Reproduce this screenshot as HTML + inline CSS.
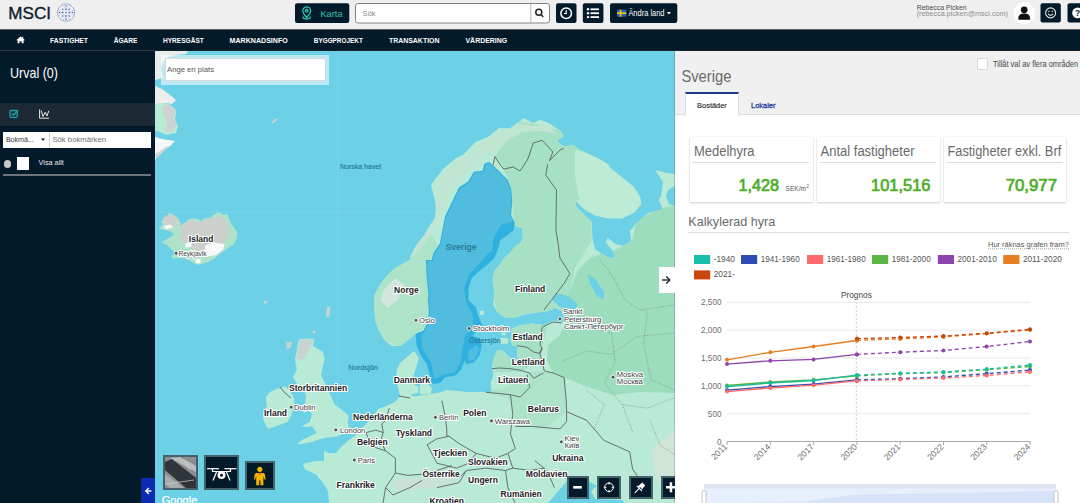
<!DOCTYPE html>
<html><head><meta charset="utf-8">
<style>
*{box-sizing:border-box;margin:0;padding:0}
html,body{width:1080px;height:503px;overflow:hidden;background:#fff;font-family:"Liberation Sans",sans-serif}
.a{position:absolute}
svg{position:absolute;overflow:visible}
#hdr{left:0;top:0;width:1080px;height:29px;background:#efefef}
#nav{left:0;top:29px;width:1080px;height:21px;background:#031a2a;border-top:1px solid #5d686e}
#side{left:0;top:50px;width:155px;height:453px;background:#031a2a;border-top:1px solid #2f3a42}
#map{left:155px;top:51px;width:520px;height:452px;background:#6cd1e6;overflow:hidden}
#rp{left:675px;top:51px;width:405px;height:452px;background:#fff;overflow:hidden}
.btn{position:absolute;background:#031a2a;border-radius:2px}
.mb{position:absolute;background:#031a2a;border:2px solid #43626c}
</style></head><body>
<div id="hdr" class="a"></div>
<div id="nav" class="a"></div>
<div class="a" style="left:155px;top:50px;width:925px;height:1px;background:#16232b"></div>
<div id="side" class="a">
  <div class="a" style="left:0;top:52px;width:155px;height:23px;background:#1c2a35"></div>
  <div class="a" style="left:3px;top:81px;width:148px;height:16px;background:#fff"></div>
  <div class="a" style="left:49px;top:82px;width:1px;height:14px;background:#d0d0d0"></div>
  <div class="a" style="left:3.5px;top:109px;width:7.5px;height:7.5px;border-radius:50%;background:#c8c8c8"></div>
  <div class="a" style="left:17px;top:106px;width:12px;height:12.5px;background:#fff"></div>
  <div class="a" style="left:3px;top:123px;width:148px;height:1.5px;background:#6a747a"></div>
  <div class="a" style="left:141px;top:427px;width:14px;height:26px;background:#0b2bb0"></div>
</div>
<div id="map" class="a"><svg width="520" height="452" viewBox="155 51 520 452" style="position:absolute;left:0;top:0" font-family="Liberation Sans, sans-serif">
<rect x="155" y="51" width="520" height="452" fill="#6cd1e6"/>
<line x1="337.8" y1="51" x2="337.8" y2="503" stroke="#7dd7ea" stroke-width="0.7"/>
<line x1="155" y1="212" x2="675" y2="212" stroke="#7dd7ea" stroke-width="0.7"/>
<polygon points="155.0,51.0 188.0,51.0 186.0,54.0 175.0,55.0 168.0,57.0 163.0,62.0 161.0,70.0 163.0,78.0 155.0,80.0" fill="#e8ecea"/>
<polygon points="155.0,86.0 162.0,89.0 170.0,95.0 176.0,100.0 172.0,104.0 165.0,103.0 160.0,107.0 155.0,109.0" fill="#eceeed"/>
<polygon points="155.0,104.0 162.0,103.0 168.0,104.0 172.0,108.0 176.0,112.0 175.0,120.0 178.0,126.0 176.0,133.0 166.0,135.0 158.0,131.0 155.0,131.0" fill="#b9ead5"/>
<polygon points="163.0,106.0 170.0,104.0 176.0,110.0 174.0,118.0 177.0,125.0 172.0,132.0 165.0,131.0 167.0,120.0 163.0,114.0" fill="#cdd3d1"/>
<polygon points="155.0,137.0 162.0,139.0 175.0,141.0 170.0,146.0 163.0,150.0 158.0,156.0 155.0,160.0" fill="#f6f7f7"/>
<polygon points="160.0,151.0 166.0,147.0 170.0,146.0 163.0,152.0 158.0,157.0 155.0,158.0 155.0,154.0" fill="#d2d6d5"/>
<polygon points="168.9,213.3 174.5,214.7 177.9,218.2 180.7,223.1 180.0,225.9 182.8,226.6 188.4,219.6 195.3,218.2 200.9,221.0 204.4,218.2 210.6,217.5 214.8,214.0 219.0,212.0 223.2,214.7 227.3,214.0 231.5,224.5 234.3,227.9 237.1,231.4 237.1,237.0 234.3,243.9 230.1,246.7 225.9,249.5 220.4,253.7 213.4,259.2 207.9,262.0 199.5,264.8 195.3,264.1 189.8,260.6 185.6,258.5 180.0,257.9 173.1,258.5 171.0,256.5 175.9,253.0 171.7,249.5 167.5,245.3 161.3,242.6 168.2,238.4 174.5,234.2 170.3,231.4 164.7,230.0 158.5,228.6 163.3,224.5 160.6,221.7 166.1,217.5" fill="#aee3c9"/>
<polygon points="180.0,225.9 188.4,220.3 200.9,221.7 210.6,218.2 220.4,216.1 227.3,221.7 230.1,232.8 224.5,243.9 213.4,250.9 205.1,253.7 196.7,250.9 187.0,245.3 180.0,239.8 181.4,232.8" fill="#cbd0cd"/>
<polygon points="163.3,217.5 168.9,214.7 174.5,216.1 177.9,220.3 178.6,225.9 171.7,227.3 166.1,227.3 163.3,223.1" fill="#cbd0cd"/>
<polygon points="205.1,245.3 213.4,242.6 224.5,243.9 223.2,249.5 216.2,255.1 207.9,256.5 205.1,250.9" fill="#f7f8f8"/>
<polygon points="184.9,243.2 191.9,242.6 191.2,246.7 185.6,247.4" fill="#f7f8f8"/>
<polygon points="195.3,259.2 200.9,258.5 200.2,263.4 195.6,263.1" fill="#f7f8f8"/>
<polygon points="163.3,225.9 170.3,224.5 173.1,227.3 166.1,229.3" fill="#f7f8f8"/>
<polygon points="314.8,338.8 300.8,338.8 298.9,340.0 297.5,345.0 296.9,349.7 294.9,359.6 296.9,369.6 292.9,377.5 296.6,383.0 301.0,390.0 305.5,393.2 306.0,398.0 305.5,402.1 303.3,413.2 308.0,411.0 312.1,413.2 309.9,422.0 304.0,425.0 301.0,426.5 306.0,427.0 312.1,426.5 316.6,433.1 312.0,435.0 307.7,437.6 302.0,440.0 296.6,444.2 304.0,443.5 312.1,442.0 320.0,439.0 327.7,437.6 337.0,436.5 345.4,433.1 350.0,431.0 347.6,422.0 349.0,416.0 343.2,410.9 334.3,404.3 331.0,396.0 327.7,388.7 321.0,375.4 323.2,364.0 324.7,359.6 322.7,351.7 312.8,345.7" fill="#b9ead5"/>
<polygon points="300.8,339.8 314.0,339.5 311.0,346.0 306.0,355.0 302.0,360.0 297.0,359.0 297.5,348.0" fill="#c6d3ce"/>
<polygon points="286.0,342.0 292.0,341.7 291.0,347.0 287.0,349.7" fill="#c3d6cd"/>
<polygon points="327.0,307.0 330.7,306.0 329.0,318.0 326.0,316.0" fill="#c3d6cd"/>
<polygon points="312.8,330.8 315.8,331.0 315.0,333.8 312.5,333.5" fill="#c3d6cd"/>
<polygon points="264.0,301.0 267.0,300.5 266.5,304.0 264.0,303.5" fill="#c3d6cd"/>
<polygon points="276.6,388.7 285.5,386.5 291.0,392.0 294.4,399.8 292.2,413.2 287.7,422.0 278.0,425.5 267.8,428.7 263.3,420.0 263.3,413.2 267.0,406.0 265.5,397.6 270.0,392.0" fill="#b9ead5"/>
<polygon points="675.0,174.0 667.0,173.0 655.0,170.0 663.0,182.0 661.0,196.0 659.0,200.0 663.0,209.5 649.2,212.6 645.0,215.4 636.0,223.4 629.7,231.3 631.3,240.9 623.4,245.7 615.4,244.1 607.5,237.7 605.9,242.5 612.2,250.4 615.4,256.8 610.7,258.4 601.1,253.6 594.8,248.8 592.4,237.7 591.6,221.8 586.8,217.0 575.7,205.9 575.7,201.1 583.6,209.1 594.8,215.4 607.5,218.6 621.8,218.6 634.5,212.3 640.9,204.3 640.2,197.1 633.7,186.8 620.8,176.5 607.9,166.1 610.0,166.0 603.0,161.0 592.0,155.5 580.0,150.0 573.0,145.0 564.0,146.5 556.5,141.0 564.0,136.0 560.0,130.4 549.0,123.3 540.0,119.7 533.0,123.3 524.0,118.0 517.0,123.3 510.0,128.6 499.0,128.0 488.0,137.0 475.5,142.0 463.0,155.0 456.0,158.0 443.0,169.0 431.0,185.0 434.0,196.0 436.0,208.0 435.0,218.0 428.6,227.7 424.0,235.7 417.5,243.6 411.0,254.8 409.7,260.0 397.0,267.0 390.0,272.5 381.0,283.0 374.0,296.0 374.0,308.0 375.7,322.6 379.3,331.6 384.7,340.5 391.8,345.9 400.8,345.9 411.5,337.0 418.7,331.6 424.0,332.0 420.0,345.0 424.0,355.0 430.0,367.0 434.0,379.0 437.0,381.0 441.0,376.0 448.0,371.0 454.0,366.0 457.0,357.0 458.0,347.0 466.0,331.0 476.0,320.0 472.0,310.0 464.0,302.0 464.0,288.0 469.0,275.0 478.0,265.0 486.0,256.0 492.5,250.0 493.0,240.0 495.5,234.0 501.5,224.6 514.6,225.8 521.8,228.2 523.0,237.7 520.6,242.5 515.8,246.0 509.8,253.1 503.9,257.9 500.3,263.9 494.3,271.0 492.5,279.4 494.3,290.1 494.5,295.0 493.0,304.5 497.7,312.5 504.1,317.3 513.6,318.1 526.4,314.1 537.5,312.5 548.6,310.9 555.0,307.7 561.3,310.9 565.0,315.7 565.0,322.0 553.4,320.4 543.8,325.2 532.7,323.6 520.0,325.2 512.0,328.4 511.4,331.1 510.7,340.9 512.8,345.7 517.0,346.0 517.5,352.0 517.0,359.0 512.0,359.0 508.0,356.0 504.0,351.0 499.0,350.0 496.0,352.0 493.3,360.4 492.0,367.3 493.3,375.7 490.6,382.6 491.3,390.0 491.0,392.0 482.0,392.0 468.0,392.0 446.0,390.0 442.0,392.0 430.0,394.0 418.0,396.0 411.0,396.0 416.0,387.0 412.0,380.0 416.0,368.0 419.0,358.0 414.0,351.0 406.0,358.0 400.0,363.0 397.0,370.0 396.0,377.0 398.0,387.0 400.0,396.0 395.0,402.0 385.0,406.6 378.0,409.0 373.0,417.0 369.0,421.0 362.0,428.0 357.0,434.0 349.0,440.0 341.0,447.0 336.0,453.0 329.0,453.0 324.0,451.0 324.0,461.0 315.0,461.0 303.0,464.0 305.0,469.5 316.0,474.5 323.0,483.0 328.0,491.0 329.0,503.0 548.0,503.0 555.0,495.0 561.0,488.0 566.0,482.0 590.0,482.0 597.0,486.0 591.0,491.0 595.0,499.0 622.0,500.0 625.0,503.0 675.0,503.0" fill="#b9ead5"/>
<clipPath id="ml"><polygon points="675.0,174.0 667.0,173.0 655.0,170.0 663.0,182.0 661.0,196.0 659.0,200.0 663.0,209.5 649.2,212.6 645.0,215.4 636.0,223.4 629.7,231.3 631.3,240.9 623.4,245.7 615.4,244.1 607.5,237.7 605.9,242.5 612.2,250.4 615.4,256.8 610.7,258.4 601.1,253.6 594.8,248.8 592.4,237.7 591.6,221.8 586.8,217.0 575.7,205.9 575.7,201.1 583.6,209.1 594.8,215.4 607.5,218.6 621.8,218.6 634.5,212.3 640.9,204.3 640.2,197.1 633.7,186.8 620.8,176.5 607.9,166.1 610.0,166.0 603.0,161.0 592.0,155.5 580.0,150.0 573.0,145.0 564.0,146.5 556.5,141.0 564.0,136.0 560.0,130.4 549.0,123.3 540.0,119.7 533.0,123.3 524.0,118.0 517.0,123.3 510.0,128.6 499.0,128.0 488.0,137.0 475.5,142.0 463.0,155.0 456.0,158.0 443.0,169.0 431.0,185.0 434.0,196.0 436.0,208.0 435.0,218.0 428.6,227.7 424.0,235.7 417.5,243.6 411.0,254.8 409.7,260.0 397.0,267.0 390.0,272.5 381.0,283.0 374.0,296.0 374.0,308.0 375.7,322.6 379.3,331.6 384.7,340.5 391.8,345.9 400.8,345.9 411.5,337.0 418.7,331.6 424.0,332.0 420.0,345.0 424.0,355.0 430.0,367.0 434.0,379.0 437.0,381.0 441.0,376.0 448.0,371.0 454.0,366.0 457.0,357.0 458.0,347.0 466.0,331.0 476.0,320.0 472.0,310.0 464.0,302.0 464.0,288.0 469.0,275.0 478.0,265.0 486.0,256.0 492.5,250.0 493.0,240.0 495.5,234.0 501.5,224.6 514.6,225.8 521.8,228.2 523.0,237.7 520.6,242.5 515.8,246.0 509.8,253.1 503.9,257.9 500.3,263.9 494.3,271.0 492.5,279.4 494.3,290.1 494.5,295.0 493.0,304.5 497.7,312.5 504.1,317.3 513.6,318.1 526.4,314.1 537.5,312.5 548.6,310.9 555.0,307.7 561.3,310.9 565.0,315.7 565.0,322.0 553.4,320.4 543.8,325.2 532.7,323.6 520.0,325.2 512.0,328.4 511.4,331.1 510.7,340.9 512.8,345.7 517.0,346.0 517.5,352.0 517.0,359.0 512.0,359.0 508.0,356.0 504.0,351.0 499.0,350.0 496.0,352.0 493.3,360.4 492.0,367.3 493.3,375.7 490.6,382.6 491.3,390.0 491.0,392.0 482.0,392.0 468.0,392.0 446.0,390.0 442.0,392.0 430.0,394.0 418.0,396.0 411.0,396.0 416.0,387.0 412.0,380.0 416.0,368.0 419.0,358.0 414.0,351.0 406.0,358.0 400.0,363.0 397.0,370.0 396.0,377.0 398.0,387.0 400.0,396.0 395.0,402.0 385.0,406.6 378.0,409.0 373.0,417.0 369.0,421.0 362.0,428.0 357.0,434.0 349.0,440.0 341.0,447.0 336.0,453.0 329.0,453.0 324.0,451.0 324.0,461.0 315.0,461.0 303.0,464.0 305.0,469.5 316.0,474.5 323.0,483.0 328.0,491.0 329.0,503.0 548.0,503.0 555.0,495.0 561.0,488.0 566.0,482.0 590.0,482.0 597.0,486.0 591.0,491.0 595.0,499.0 622.0,500.0 625.0,503.0 675.0,503.0"/></clipPath><g clip-path="url(#ml)">
<polygon points="495.0,156.0 520.0,121.0 560.0,130.0 600.0,160.0 600.0,200.0 576.0,200.0 590.0,215.0 592.0,240.0 575.0,268.0 565.0,316.0 548.0,322.0 540.0,360.0 520.0,372.0 493.0,372.0 492.0,350.0 508.0,328.0 497.0,312.0 492.0,290.0 494.0,270.0 515.0,228.0 512.0,200.0 508.0,178.0" fill="#a6e1c5"/>
<polygon points="483.0,392.0 505.0,388.0 530.0,372.0 545.0,371.0 566.0,378.0 566.0,412.0 545.0,428.0 515.0,426.0 512.0,400.0" fill="#ace3c9"/>
<polygon points="636.0,223.0 645.0,216.0 660.0,208.0 675.0,206.0 675.0,393.0 640.0,392.0 612.0,395.0 585.0,386.0 566.0,378.0 553.0,373.0 547.0,360.0 548.0,345.0 560.0,335.0 565.0,322.0 563.0,310.0 570.0,290.0 578.0,270.0 590.0,258.0 601.0,254.0 612.0,251.0 624.0,246.0 632.0,241.0" fill="#9cddbe"/>
<polygon points="372.0,290.0 400.0,262.0 420.0,245.0 432.0,235.0 440.0,250.0 432.0,300.0 428.0,330.0 400.0,348.0 375.0,335.0" fill="#ace3c9"/>
<polygon points="575.0,150.0 610.0,160.0 640.0,190.0 642.0,205.0 630.0,218.0 600.0,216.0 585.0,208.0 578.0,195.0 575.0,175.0" fill="#bdebd6"/>
<polygon points="393.0,480.0 405.0,478.0 420.0,478.0 440.0,476.0 455.0,478.0 450.0,486.0 430.0,488.0 410.0,490.0 395.0,490.0" fill="#c8e3d6"/>
<polygon points="433.0,187.0 445.0,172.0 458.0,160.0 465.0,157.0 477.0,145.0 489.0,139.0 500.0,131.0 510.0,127.0 518.0,124.0 533.0,126.0 548.0,126.0 556.0,133.0 540.0,131.0 522.0,132.0 505.0,142.0 490.0,152.0 475.0,163.0 462.0,177.0 450.0,192.0 442.0,212.0 432.0,232.0 420.0,250.0 411.0,258.0 416.0,243.0 426.0,226.0 433.0,212.0 436.0,200.0" fill="#c0e5d3"/>
<polygon points="384.0,290.0 395.0,278.0 405.0,285.0 398.0,300.0 388.0,308.0 380.0,300.0" fill="#d2e6dd"/>
</g>
<polygon points="652.0,450.0 662.0,440.0 675.0,430.0 675.0,488.0 660.0,486.0 654.0,470.0" fill="#cfe6d6"/>
<polygon points="499.0,338.5 504.0,337.5 508.7,339.0 508.0,343.7 501.0,344.0" fill="#b9ead5"/>
<polygon points="501.7,332.5 505.9,332.5 505.5,335.3 501.7,335.3" fill="#b9ead5"/>
<polygon points="409.0,387.0 418.0,386.0 418.5,393.0 410.0,394.5" fill="#b9ead5"/>
<polygon points="419.5,384.5 427.0,383.0 432.0,388.0 430.5,394.0 420.0,394.5" fill="#b9ead5"/>
<polygon points="480.0,311.0 484.0,310.5 484.0,314.5 480.0,315.0" fill="#b9ead5"/>
<polygon points="271.0,122.0 276.0,118.5 279.0,117.5 277.0,120.0 273.0,123.5" fill="#c9cfcd"/>
<polygon points="556.0,293.0 568.0,296.0 578.0,304.0 575.0,310.0 560.0,307.0 552.0,300.0" fill="#6cd1e6"/>
<polygon points="588.0,273.7 596.0,280.0 604.0,292.0 603.6,299.6 597.0,296.0 590.0,284.0" fill="#6cd1e6"/>
<polygon points="675.0,186.0 668.0,190.0 666.0,197.0 669.0,204.0 675.0,206.0" fill="#6cd1e6"/>
<polygon points="488.9,161.9 484.4,163.7 482.6,170.8 473.7,171.7 468.3,181.6 459.4,186.9 455.8,194.1 445.0,216.6 442.9,227.7 439.8,243.6 433.4,253.2 431.8,260.0 425.9,260.0 426.7,277.9 428.5,295.0 427.9,300.0 428.9,311.3 427.9,322.6 423.2,331.1 415.7,334.0 416.6,345.3 420.4,354.7 427.0,364.2 428.9,371.7 430.8,379.2 432.6,384.0 440.2,383.0 444.9,377.4 455.3,375.5 460.9,369.8 464.7,360.4 466.6,364.2 474.2,362.3 479.8,354.7 481.7,345.3 479.0,338.0 472.0,336.0 477.9,330.2 483.6,328.3 477.9,315.1 476.0,307.5 468.5,300.0 468.6,287.7 471.8,278.2 478.2,271.8 487.2,265.0 494.3,257.9 497.9,249.5 500.3,240.1 507.4,235.3 513.4,230.6 514.6,225.8 514.6,222.2 511.0,215.0 512.2,201.9 511.2,188.7 507.7,179.8 498.7,170.8 493.3,165.5" fill="#2eb0e1"/>
<polygon points="488.9,163.0 485.4,164.7 483.6,171.8 474.5,172.7 469.3,182.5 460.4,187.9 456.8,195.0 446.0,217.0 443.9,228.0 440.8,244.0 434.4,254.0 432.8,261.0 426.9,261.0 427.7,278.0 429.5,295.0 428.9,300.0 429.9,311.3 428.9,322.6 424.5,331.5 421.3,335.8 422.3,349.0 430.8,362.3 434.5,379.2 444.0,374.5 455.3,372.6 460.0,364.2 462.8,347.2 464.7,335.8 474.2,328.3 472.3,313.2 466.6,303.8 464.0,288.0 469.0,275.0 478.0,265.0 486.0,256.0 492.5,250.0 493.0,240.0 495.5,234.0 501.5,224.6 510.0,222.5 513.6,222.0 510.0,215.0 511.2,202.0 510.2,189.0 506.7,180.5 497.9,171.6 492.5,166.3" fill="#50bcde"/>
<polygon points="468.5,351.0 476.0,345.3 479.8,349.0 474.2,360.4 468.5,360.4" fill="#50bcde"/>
<polyline points="561.5,361.6 586.5,350.9 611.6,354.4 636.7,336.5 675.0,333.0" fill="none" stroke="#7f908a" stroke-width="0.7" stroke-dasharray="1.3,1.3"/>
<polyline points="611.6,333.0 615.2,361.6 604.4,383.0 622.3,404.6 633.1,433.2" fill="none" stroke="#7f908a" stroke-width="0.7" stroke-dasharray="1.3,1.3"/>
<polyline points="647.4,311.5 643.8,343.7 651.0,379.5 675.0,390.3" fill="none" stroke="#7f908a" stroke-width="0.7" stroke-dasharray="1.3,1.3"/>
<polyline points="586.5,390.3 604.4,404.6 593.7,429.6" fill="none" stroke="#7f908a" stroke-width="0.7" stroke-dasharray="1.3,1.3"/>
<polyline points="622.3,404.6 647.4,408.2 675.0,397.4" fill="none" stroke="#7f908a" stroke-width="0.7" stroke-dasharray="1.3,1.3"/>
<polyline points="561.5,311.5 583.0,325.8 611.6,333.0" fill="none" stroke="#7f908a" stroke-width="0.7" stroke-dasharray="1.3,1.3"/>
<polyline points="600.0,260.0 612.0,275.0 625.0,300.0 640.0,310.0 675.0,305.0" fill="none" stroke="#7f908a" stroke-width="0.7" stroke-dasharray="1.3,1.3"/>
<polyline points="650.0,420.0 660.0,445.0 675.0,455.0" fill="none" stroke="#7f908a" stroke-width="0.7" stroke-dasharray="1.3,1.3"/>
<polyline points="493.0,165.0 495.0,156.5 500.5,165.5 504.0,169.0 513.0,167.0 520.0,171.0 527.9,159.0 533.3,142.9 542.2,140.3 552.9,151.9 549.4,160.8 560.0,150.0 563.7,148.3" fill="none" stroke="#5b6366" stroke-width="0.9"/>
<polyline points="547.6,164.4 545.8,175.1 556.5,190.0 555.9,230.0 557.9,241.9 559.9,257.8 569.8,273.7 563.9,283.7 551.9,299.6 544.0,310.0" fill="none" stroke="#5b6366" stroke-width="0.9"/>
<polyline points="561.8,322.8 553.0,322.0 542.1,327.2 540.0,344.6 542.1,349.0 540.0,353.4 544.3,370.9" fill="none" stroke="#5b6366" stroke-width="0.9"/>
<polyline points="517.0,345.7 526.7,347.1 533.7,352.0 539.3,353.4 542.0,347.8" fill="none" stroke="#5b6366" stroke-width="0.9"/>
<polyline points="492.0,368.7 498.9,368.0 510.0,368.7 519.8,370.1 529.5,372.9 533.7,378.4 543.4,372.9" fill="none" stroke="#5b6366" stroke-width="0.9"/>
<polyline points="527.5,375.0 527.5,380.0 529.9,387.3 520.2,397.1 510.4,394.7" fill="none" stroke="#5b6366" stroke-width="0.9"/>
<polyline points="544.3,370.9 553.0,373.0 564.0,377.4 566.2,400.0 566.6,411.7 586.7,420.3 603.9,440.4 629.7,451.8 632.6,469.0 640.0,480.0" fill="none" stroke="#5b6366" stroke-width="0.9"/>
<polyline points="485.9,392.2 510.4,394.7 512.8,414.2 510.4,433.8 515.3,448.5 507.9,453.4" fill="none" stroke="#5b6366" stroke-width="0.9"/>
<polyline points="515.3,426.5 532.4,426.5 560.0,428.9 566.6,421.7 566.6,411.7" fill="none" stroke="#5b6366" stroke-width="0.9"/>
<polyline points="441.9,400.8 444.3,411.8 446.8,428.9 446.8,436.3 449.2,436.3" fill="none" stroke="#5b6366" stroke-width="0.9"/>
<polyline points="389.3,408.1 385.6,420.4 381.9,424.0 383.2,432.6 380.7,441.2 385.6,450.9 395.4,458.3 395.4,473.0 385.6,487.6 383.0,503.0" fill="none" stroke="#5b6366" stroke-width="0.9"/>
<polyline points="366.0,432.6 375.8,430.1 383.2,432.6" fill="none" stroke="#5b6366" stroke-width="0.9"/>
<polyline points="366.0,432.6 370.9,446.0 385.6,450.9" fill="none" stroke="#5b6366" stroke-width="0.9"/>
<polyline points="395.4,473.0 407.6,475.4 422.3,474.2 437.0,470.5 451.7,465.6" fill="none" stroke="#5b6366" stroke-width="0.9"/>
<polyline points="427.2,444.8 437.0,438.7 449.2,436.3 459.0,443.6 476.1,453.4" fill="none" stroke="#5b6366" stroke-width="0.9"/>
<polyline points="427.2,444.8 437.0,463.2 456.6,468.1 468.8,463.2 476.1,453.4" fill="none" stroke="#5b6366" stroke-width="0.9"/>
<polyline points="476.1,453.4 495.7,458.3 507.9,453.4" fill="none" stroke="#5b6366" stroke-width="0.9"/>
<polyline points="459.0,477.8 466.3,470.5 485.9,468.1 505.5,470.5 512.8,468.1 529.9,470.5 544.6,468.1" fill="none" stroke="#5b6366" stroke-width="0.9"/>
<polyline points="507.9,453.4 512.8,468.1" fill="none" stroke="#5b6366" stroke-width="0.9"/>
<polyline points="505.5,470.5 507.9,487.6 515.0,503.0" fill="none" stroke="#5b6366" stroke-width="0.9"/>
<polyline points="437.0,487.6 459.0,482.7 466.3,470.5" fill="none" stroke="#5b6366" stroke-width="0.9"/>
<polyline points="385.6,487.6 393.0,495.0 410.0,487.6 422.3,480.3" fill="none" stroke="#5b6366" stroke-width="0.9"/>
<polyline points="534.8,460.7 547.0,470.5 554.4,487.6" fill="none" stroke="#5b6366" stroke-width="0.9"/>
<polyline points="399.0,396.0 410.0,398.0" fill="none" stroke="#5b6366" stroke-width="0.9"/>
<polyline points="280.0,387.0 285.0,393.0 291.0,398.0" fill="none" stroke="#5b6366" stroke-width="0.9"/>
<circle cx="176.1" cy="253.3" r="1.9" fill="#4a4f52" stroke="#fff" stroke-width="0.8"/>
<circle cx="416" cy="320.2" r="1.9" fill="#4a4f52" stroke="#fff" stroke-width="0.8"/>
<circle cx="560" cy="318.9" r="1.9" fill="#4a4f52" stroke="#fff" stroke-width="0.8"/>
<circle cx="469.2" cy="328.4" r="1.9" fill="#4a4f52" stroke="#fff" stroke-width="0.8"/>
<circle cx="613" cy="377.2" r="1.9" fill="#4a4f52" stroke="#fff" stroke-width="0.8"/>
<circle cx="291.2" cy="407.2" r="1.9" fill="#4a4f52" stroke="#fff" stroke-width="0.8"/>
<circle cx="335.8" cy="429.9" r="1.9" fill="#4a4f52" stroke="#fff" stroke-width="0.8"/>
<circle cx="435.4" cy="417.3" r="1.9" fill="#4a4f52" stroke="#fff" stroke-width="0.8"/>
<circle cx="491.4" cy="420.9" r="1.9" fill="#4a4f52" stroke="#fff" stroke-width="0.8"/>
<circle cx="561.4" cy="441.8" r="1.9" fill="#4a4f52" stroke="#fff" stroke-width="0.8"/>
<circle cx="354.3" cy="460" r="1.9" fill="#4a4f52" stroke="#fff" stroke-width="0.8"/>
<text x="188.8" y="241.9" font-size="8.5" font-weight="bold" fill="#202124" stroke="#fff" stroke-width="2.2" paint-order="stroke" stroke-linejoin="round">Island</text>
<text x="178.4" y="255.5" font-size="6.6" fill="#3c4043" stroke="#fff" stroke-width="2" paint-order="stroke" stroke-linejoin="round">Reykjavik</text>
<text x="340" y="168.5" font-size="7" fill="#26789a" stroke="#26789a" stroke-width="0.15" paint-order="stroke" stroke-linejoin="round">Norska havet</text>
<text x="445.5" y="250" font-size="8.6" font-weight="bold" fill="#24728c" fill-opacity="0.9" paint-order="stroke" stroke-linejoin="round">Sverige</text>
<text x="394.1" y="293" font-size="8.5" font-weight="bold" fill="#202124" stroke="#fff" stroke-width="2.2" paint-order="stroke" stroke-linejoin="round">Norge</text>
<text x="419" y="323.2" font-size="7.6" fill="#3c4043" stroke="#fff" stroke-width="2" paint-order="stroke" stroke-linejoin="round">Oslo</text>
<text x="515.1" y="291.7" font-size="8.5" font-weight="bold" fill="#202124" stroke="#fff" stroke-width="2.2" paint-order="stroke" stroke-linejoin="round">Finland</text>
<text x="562.9" y="314.3" font-size="7.6" fill="#3c4043" stroke="#fff" stroke-width="2" paint-order="stroke" stroke-linejoin="round">Sankt</text>
<text x="564" y="321.8" font-size="7.6" fill="#3c4043" stroke="#fff" stroke-width="2" paint-order="stroke" stroke-linejoin="round">Petersburg</text>
<text x="564" y="329.3" font-size="7.6" fill="#3c4043" stroke="#fff" stroke-width="2" paint-order="stroke" stroke-linejoin="round">Санкт-Петербург</text>
<text x="472.8" y="331.2" font-size="7.8" fill="#3c4043" stroke="#fff" stroke-width="2" paint-order="stroke" stroke-linejoin="round">Stockholm</text>
<text x="469" y="343" font-size="7.4" fill="#26789a" stroke="#26789a" stroke-width="0.15" paint-order="stroke" stroke-linejoin="round">Östersjön</text>
<text x="512.4" y="340.4" font-size="8.4" font-weight="bold" fill="#202124" stroke="#fff" stroke-width="2.2" paint-order="stroke" stroke-linejoin="round">Estland</text>
<text x="511.8" y="364.6" font-size="8.5" font-weight="bold" fill="#202124" stroke="#fff" stroke-width="2.2" paint-order="stroke" stroke-linejoin="round">Lettland</text>
<text x="497.9" y="382.7" font-size="8.5" font-weight="bold" fill="#202124" stroke="#fff" stroke-width="2.2" paint-order="stroke" stroke-linejoin="round">Litauen</text>
<text x="616.8" y="376.6" font-size="7.6" fill="#3c4043" stroke="#fff" stroke-width="2" paint-order="stroke" stroke-linejoin="round">Moskva</text>
<text x="616.8" y="384" font-size="7.6" fill="#3c4043" stroke="#fff" stroke-width="2" paint-order="stroke" stroke-linejoin="round">Москва</text>
<text x="393.7" y="383.2" font-size="8.5" font-weight="bold" fill="#202124" stroke="#fff" stroke-width="2.2" paint-order="stroke" stroke-linejoin="round">Danmark</text>
<text x="348.3" y="370" font-size="7.4" fill="#26789a" stroke="#26789a" stroke-width="0.15" paint-order="stroke" stroke-linejoin="round">Nordsjön</text>
<text x="289" y="390.5" font-size="8.5" font-weight="bold" fill="#202124" stroke="#fff" stroke-width="2.2" paint-order="stroke" stroke-linejoin="round">Storbritannien</text>
<text x="294" y="410.3" font-size="7.6" fill="#3c4043" stroke="#fff" stroke-width="2" paint-order="stroke" stroke-linejoin="round">Dublin</text>
<text x="263.9" y="415.8" font-size="8.5" font-weight="bold" fill="#202124" stroke="#fff" stroke-width="2.2" paint-order="stroke" stroke-linejoin="round">Irland</text>
<text x="340" y="433" font-size="7.6" fill="#3c4043" stroke="#fff" stroke-width="2" paint-order="stroke" stroke-linejoin="round">London</text>
<text x="353.1" y="420.2" font-size="8.5" font-weight="bold" fill="#202124" stroke="#fff" stroke-width="2.2" paint-order="stroke" stroke-linejoin="round">Nederländerna</text>
<text x="356.9" y="444.6" font-size="8.5" font-weight="bold" fill="#202124" stroke="#fff" stroke-width="2.2" paint-order="stroke" stroke-linejoin="round">Belgien</text>
<text x="439" y="420.4" font-size="7.6" fill="#3c4043" stroke="#fff" stroke-width="2" paint-order="stroke" stroke-linejoin="round">Berlin</text>
<text x="463.2" y="416.2" font-size="8.5" font-weight="bold" fill="#202124" stroke="#fff" stroke-width="2.2" paint-order="stroke" stroke-linejoin="round">Polen</text>
<text x="494.8" y="424" font-size="7.6" fill="#3c4043" stroke="#fff" stroke-width="2" paint-order="stroke" stroke-linejoin="round">Warszawa</text>
<text x="527.8" y="412.2" font-size="8.5" font-weight="bold" fill="#202124" stroke="#fff" stroke-width="2.2" paint-order="stroke" stroke-linejoin="round">Belarus</text>
<text x="564.6" y="440.6" font-size="7.6" fill="#3c4043" stroke="#fff" stroke-width="2" paint-order="stroke" stroke-linejoin="round">Kiev</text>
<text x="564.6" y="448.4" font-size="7.6" fill="#3c4043" stroke="#fff" stroke-width="2" paint-order="stroke" stroke-linejoin="round">Київ</text>
<text x="552.2" y="461.3" font-size="8.5" font-weight="bold" fill="#202124" stroke="#fff" stroke-width="2.2" paint-order="stroke" stroke-linejoin="round">Ukraina</text>
<text x="395.8" y="436" font-size="8.5" font-weight="bold" fill="#202124" stroke="#fff" stroke-width="2.2" paint-order="stroke" stroke-linejoin="round">Tyskland</text>
<text x="357.8" y="463.2" font-size="7.6" fill="#3c4043" stroke="#fff" stroke-width="2" paint-order="stroke" stroke-linejoin="round">Paris</text>
<text x="336.5" y="487.7" font-size="8.5" font-weight="bold" fill="#202124" stroke="#fff" stroke-width="2.2" paint-order="stroke" stroke-linejoin="round">Frankrike</text>
<text x="433.1" y="456.3" font-size="8.5" font-weight="bold" fill="#202124" stroke="#fff" stroke-width="2.2" paint-order="stroke" stroke-linejoin="round">Tjeckien</text>
<text x="422.5" y="477.2" font-size="8.5" font-weight="bold" fill="#202124" stroke="#fff" stroke-width="2.2" paint-order="stroke" stroke-linejoin="round">Österrike</text>
<text x="468.1" y="464.8" font-size="8.5" font-weight="bold" fill="#202124" stroke="#fff" stroke-width="2.2" paint-order="stroke" stroke-linejoin="round">Slovakien</text>
<text x="468.1" y="483.4" font-size="8.5" font-weight="bold" fill="#202124" stroke="#fff" stroke-width="2.2" paint-order="stroke" stroke-linejoin="round">Ungern</text>
<text x="525.8" y="477.2" font-size="8.5" font-weight="bold" fill="#202124" stroke="#fff" stroke-width="2.2" paint-order="stroke" stroke-linejoin="round">Moldavien</text>
<text x="500.6" y="496.6" font-size="8.5" font-weight="bold" fill="#202124" stroke="#fff" stroke-width="2.2" paint-order="stroke" stroke-linejoin="round">Rumänien</text>
<text x="429.4" y="503.8" font-size="8.5" font-weight="bold" fill="#202124" stroke="#fff" stroke-width="2.2" paint-order="stroke" stroke-linejoin="round">Kroatien</text>
</svg>
  <div class="a" style="left:6px;top:4px;width:168px;height:30px;background:rgba(255,255,255,0.55)"></div>
  <div class="a" style="left:10px;top:7px;width:160.5px;height:23px;background:#fff;border:1px solid #d6dadc"></div>
  <div class="mb" style="left:8px;top:404px;width:35px;height:35px;background:#6e7275"></div>
  <div class="mb" style="left:49px;top:404px;width:35px;height:35px"></div>
  <div class="mb" style="left:90px;top:410px;width:30px;height:29px"></div>
  <div class="mb" style="left:411.5px;top:424.5px;width:22.5px;height:23px"></div>
  <div class="mb" style="left:442px;top:424.5px;width:24px;height:23px"></div>
  <div class="mb" style="left:474px;top:424.5px;width:24px;height:23px"></div>
  <div class="mb" style="left:505.5px;top:424.5px;width:24px;height:23px"></div>
  <div class="a" style="left:518.5px;top:0;width:1.5px;height:452px;background:rgba(40,60,70,0.22)"></div>
  <div class="a" style="left:504px;top:216px;width:16px;height:25.5px;background:#fff"></div>
</div>
<div id="rp" class="a">
  <div class="a" style="left:0;top:0;width:405px;height:64px;background:#f0f0f0;border-bottom:1px solid #dcdcdc"></div>
  <div class="a" style="left:10px;top:41px;width:54px;height:24px;background:#fff;border-top:2px solid #1b3a8a;border-left:1px solid #dedede;border-right:1px solid #dedede"></div>
  <div class="a" style="left:301.5px;top:6.8px;width:11.5px;height:12px;background:#fff;border:1px solid #d8d8d8;border-radius:2px"></div>
  <div class="a" style="left:15px;top:85.5px;width:123px;height:65.5px;background:#fff;box-shadow:0 1px 2px rgba(0,0,0,0.18),0 0 1px rgba(0,0,0,0.12)"></div>
  <div class="a" style="left:142px;top:85.5px;width:123px;height:65.5px;background:#fff;box-shadow:0 1px 2px rgba(0,0,0,0.18),0 0 1px rgba(0,0,0,0.12)"></div>
  <div class="a" style="left:269px;top:85.5px;width:122px;height:65.5px;background:#fff;box-shadow:0 1px 2px rgba(0,0,0,0.18),0 0 1px rgba(0,0,0,0.12)"></div>
  <div class="a" style="left:18px;top:111px;width:116px;height:1px;background:#dcdcdc"></div>
  <div class="a" style="left:145px;top:111px;width:116px;height:1px;background:#dcdcdc"></div>
  <div class="a" style="left:272px;top:111px;width:116px;height:1px;background:#dcdcdc"></div>
  <div class="a" style="left:13px;top:181px;width:381px;height:1px;background:#dcdcdc"></div>
</div>
<svg width="1080" height="503" viewBox="0 0 1080 503" style="left:0;top:0" font-family="Liberation Sans, sans-serif">
<text x="8.3" y="19" font-size="16.6" fill="#0e1c2b" textLength="42.7" lengthAdjust="spacingAndGlyphs" stroke="#0e1c2b" stroke-width="0.35">MSCI</text>
<clipPath id="gc"><circle cx="66" cy="12.6" r="8.8"/></clipPath>
<circle cx="66" cy="12.6" r="8.6" fill="none" stroke="#5466c8" stroke-width="0.8" stroke-dasharray="1.2,0.7"/>
<g clip-path="url(#gc)" stroke="#8fb8d8" stroke-width="0.5" fill="none"><path d="M57,8 L71,21 M61,4 L75,17 M57,16 L61,21 M57,17 L71,4 M61,21 L75,8 M71,21 L75,17"/></g>
<g fill="#4456c0"><circle cx="66.0" cy="12.6" r="0.75"/><circle cx="69.3" cy="12.6" r="0.75"/><circle cx="62.7" cy="12.6" r="0.75"/><circle cx="66.0" cy="15.9" r="0.75"/><circle cx="66.0" cy="9.3" r="0.75"/><circle cx="69.3" cy="15.9" r="0.75"/><circle cx="62.7" cy="9.3" r="0.75"/><circle cx="69.3" cy="9.3" r="0.75"/><circle cx="62.7" cy="15.9" r="0.75"/><circle cx="72.6" cy="12.6" r="0.75"/><circle cx="59.4" cy="12.6" r="0.75"/><circle cx="66.0" cy="19.2" r="0.75"/><circle cx="66.0" cy="6.0" r="0.75"/></g>
<rect x="295" y="3.3" width="54.3" height="19.7" rx="2" fill="#031a2a"/>
<g stroke="#2ec7b2" stroke-width="1.3" fill="none"><path d="M306.7,17.5 C303,13.5 302.8,12 302.8,10.8 A3.9,3.9 0 0 1 310.6,10.8 C310.6,12 310.4,13.5 306.7,17.5 Z"/><circle cx="306.7" cy="10.8" r="1.3"/><path d="M303.5,16.5 Q302,18.8 306.7,19 Q311.4,18.8 309.9,16.5"/></g>
<text x="320.4" y="17.4" font-size="9.8" fill="#2ec7b2" textLength="22.2" lengthAdjust="spacingAndGlyphs" >Karta</text>
<rect x="355.5" y="3.5" width="194" height="19.5" rx="2.5" fill="#fff" stroke="#7d858b" stroke-width="1"/>
<line x1="530.8" y1="4" x2="530.8" y2="22.5" stroke="#b8b8b8" stroke-width="1"/>
<g stroke="#222" stroke-width="1.5" fill="none"><circle cx="538.8" cy="12.3" r="3"/><line x1="541" y1="14.6" x2="543.3" y2="17"/></g>
<text x="362.6" y="15.8" font-size="7.8" fill="#8a8a8a" textLength="13" lengthAdjust="spacingAndGlyphs" >Sök</text>
<rect x="556" y="3.3" width="20.5" height="19.7" rx="2" fill="#031a2a"/>
<g stroke="#fff" fill="none"><circle cx="566.2" cy="13.2" r="5.3" stroke-width="1.5"/><path d="M566.2,10.3 V13.5 H564" stroke-width="1.2"/></g>
<rect x="582.8" y="3.3" width="20.6" height="19.7" rx="2" fill="#031a2a"/>
<g fill="#fff"><circle cx="588" cy="9.3" r="1.2"/><circle cx="588" cy="13.2" r="1.2"/><circle cx="588" cy="17.1" r="1.2"/><rect x="590.5" y="8.4" width="8.5" height="1.8"/><rect x="590.5" y="12.3" width="8.5" height="1.8"/><rect x="590.5" y="16.2" width="8.5" height="1.8"/></g>
<rect x="610" y="3.3" width="67.3" height="19.7" rx="2" fill="#031a2a"/>
<rect x="617" y="9.7" width="9.3" height="7" fill="#2a62b8"/><rect x="619.7" y="9.7" width="1.6" height="7" fill="#f2c800"/><rect x="617" y="12.4" width="9.3" height="1.6" fill="#f2c800"/>
<text x="628.4" y="16.3" font-size="8.2" fill="#fff" textLength="36.1" lengthAdjust="spacingAndGlyphs" >Ändra land</text>
<polygon points="666.8,12 671,12 668.9,14.5" fill="#fff"/>
<text x="916.7" y="9.5" font-size="7.3" fill="#4c4c4c" textLength="50" lengthAdjust="spacingAndGlyphs" >Rebecca Picken</text>
<text x="916.7" y="15.8" font-size="7.3" fill="#8e8e8e" textLength="91.3" lengthAdjust="spacingAndGlyphs" >(rebecca.picken@msci.com)</text>
<circle cx="1024.2" cy="13.3" r="10.8" fill="#fff"/>
<g fill="#111"><circle cx="1024.2" cy="9.8" r="3.4"/><path d="M1018.2,19 Q1018.2,13.6 1024.2,13.6 Q1030.2,13.6 1030.2,19 Q1030.2,19.8 1029.4,19.8 L1019,19.8 Q1018.2,19.8 1018.2,19 Z"/></g>
<rect x="1040.5" y="3.3" width="20.3" height="19.2" rx="2" fill="#031a2a"/>
<g stroke="#e6e6d8" fill="none" stroke-width="1.1"><circle cx="1050.6" cy="12.9" r="5"/><path d="M1048.2,13.8 Q1050.6,16.6 1053,13.8"/></g><g fill="#e6e6d8"><circle cx="1048.9" cy="11.4" r="0.7"/><circle cx="1052.3" cy="11.4" r="0.7"/></g>
<rect x="1067.5" y="3.3" width="20.3" height="19.2" rx="2" fill="#031a2a"/>
<circle cx="1077.5" cy="12.9" r="5.3" fill="#fff"/>
<text x="1077.5" y="16.2" font-size="8.5" fill="#031a2a" font-weight="bold" text-anchor="middle" >?</text>
<path d="M20.6,36.4 L16.2,40.3 H17.6 V43.3 H19.5 V41.2 H21.7 V43.3 H23.6 V40.3 H25 L23.2,38.6 V36.8 H22.2 V37.7 Z" fill="#fff"/>
<text x="50" y="43" font-size="8.1" fill="#fff" font-weight="bold" textLength="38" lengthAdjust="spacingAndGlyphs" >FASTIGHET</text>
<text x="113.75" y="43" font-size="8.1" fill="#fff" font-weight="bold" textLength="23.75" lengthAdjust="spacingAndGlyphs" >ÄGARE</text>
<text x="163" y="43" font-size="8.1" fill="#fff" font-weight="bold" textLength="40.75" lengthAdjust="spacingAndGlyphs" >HYRESGÄST</text>
<text x="229.5" y="43" font-size="8.1" fill="#fff" font-weight="bold" textLength="58.3" lengthAdjust="spacingAndGlyphs" >MARKNADSINFO</text>
<text x="313.8" y="43" font-size="8.1" fill="#fff" font-weight="bold" textLength="49" lengthAdjust="spacingAndGlyphs" >BYGGPROJEKT</text>
<text x="388.9" y="43" font-size="8.1" fill="#fff" font-weight="bold" textLength="50.6" lengthAdjust="spacingAndGlyphs" >TRANSAKTION</text>
<text x="465.5" y="43" font-size="8.1" fill="#fff" font-weight="bold" textLength="41.6" lengthAdjust="spacingAndGlyphs" >VÄRDERING</text>
<text x="10" y="77.8" font-size="14.3" fill="#ffffff" textLength="48" lengthAdjust="spacingAndGlyphs" >Urval (0)</text>
<rect x="10" y="110.5" width="7.2" height="6.8" rx="1.2" fill="none" stroke="#17a8aa" stroke-width="1.3"/><path d="M11.8,113.4 L13.5,115.2 L17.8,110.2" stroke="#17a8aa" stroke-width="1.4" fill="none"/>
<g stroke="#fff" stroke-width="0.9" fill="none"><path d="M39.6,109.4 V118.2 H49"/><path d="M41.2,110.5 L43,116.5 L45.2,112.2 L47,116 L48.8,110.8"/></g>
<text x="5.9" y="142.3" font-size="7.8" fill="#333" textLength="27.9" lengthAdjust="spacingAndGlyphs" >Bokmä...</text>
<polygon points="40.8,138.6 45.2,138.6 43,141" fill="#222"/>
<text x="52.4" y="142.3" font-size="7.9" fill="#707070" textLength="53.7" lengthAdjust="spacingAndGlyphs" >Sök bokmärken</text>
<text x="38.6" y="165.2" font-size="7.2" fill="#e8e8e8" textLength="25.3" lengthAdjust="spacingAndGlyphs" >Visa allt</text>
<path d="M144.8,491 L148.4,487.6 L149.4,488.5 L147.6,490.2 H151.4 V491.8 H147.6 L149.4,493.5 L148.4,494.4 Z" fill="#fff"/>
<text x="167" y="72" font-size="7.7" fill="#555" textLength="47" lengthAdjust="spacingAndGlyphs" >Ange en plats</text>
<text x="161.8" y="503.8" font-size="11.5" fill="#fff" textLength="35.5" lengthAdjust="spacingAndGlyphs" stroke="#fff" stroke-width="0.25">Google</text>
<rect x="165" y="457" width="31" height="31" fill="#8a8e90"/>
<polygon points="165,462 172,459 196,478 196,488 186,488 165,470" fill="#2f3538"/>
<polygon points="170,458 180,457 196,466 196,472" fill="#b9bcbd"/>
<polygon points="165,474 184,488 170,488 165,484" fill="#a9adae"/>
<g stroke="#d0d2d2" stroke-width="1" opacity="0.7"><line x1="166" y1="484" x2="194" y2="480"/><line x1="185" y1="460" x2="190" y2="470"/></g>
<g stroke="#fff" stroke-width="1.2" fill="none"><line x1="207" y1="468.7" x2="219" y2="468.7"/><line x1="224.5" y1="468.7" x2="236.5" y2="468.7"/><path d="M212.5,468.7 V471.5 H230.5 V468.7 M216.5,472 L213,480.5 M226.5,472 L230,480.5"/></g><circle cx="221.5" cy="475" r="4" fill="#fff"/><circle cx="221.5" cy="475.3" r="1.5" fill="#031a2a"/>
<g fill="#f4b400"><circle cx="259.8" cy="469.3" r="2.6"/><path d="M256.3,473 H263.3 Q264.6,473 264.9,474.5 L265.7,479.5 L264.6,479.8 L263.4,476 V485.2 H260.4 V480.5 H259.2 V485.2 H256.2 V476 L255,479.8 L253.9,479.5 L254.7,474.5 Q255,473 256.3,473 Z"/></g><path d="M258.2,472.8 L259.8,475.5 L261.4,472.8" fill="#e0562a"/>
<rect x="573.2" y="486" width="8.6" height="2.6" fill="#fff"/>
<g stroke="#fff" fill="none"><circle cx="609" cy="487.3" r="4.3" stroke-width="1"/><path d="M609,482 V484.5 M609,490 V492.5 M603.8,487.3 H606.3 M611.7,487.3 H614.2" stroke-width="1"/></g>
<g fill="#fff"><path d="M638,486.2 L642.2,482.6 L645.2,485.6 L641.6,489.8 L641.2,487.6 L639.6,487.4 Z M637.2,485.6 L642.2,490.6 L641.6,491.4 L636.4,486.2 Z"/></g><line x1="634.8" y1="492.8" x2="639" y2="488.6" stroke="#fff" stroke-width="1.1"/>
<rect x="666" y="486" width="10" height="2.5" fill="#fff"/><rect x="669.7" y="482.3" width="2.5" height="10" fill="#fff"/>
<g stroke="#222" stroke-width="1.35" fill="none"><line x1="662" y1="280" x2="669.5" y2="280"/><path d="M666.3,276.6 L669.8,280 L666.3,283.4"/></g>
<text x="993.1" y="67.2" font-size="8.2" fill="#474747" textLength="85" lengthAdjust="spacingAndGlyphs" >Tillåt val av flera områden</text>
<text x="681.4" y="82" font-size="16.9" fill="#6a6a6a" textLength="50" lengthAdjust="spacingAndGlyphs" >Sverige</text>
<text x="697.1" y="107.6" font-size="7.9" fill="#2a2a2a" textLength="29.7" lengthAdjust="spacingAndGlyphs" stroke="#2a2a2a" stroke-width="0.15">Bostäder</text>
<text x="751" y="107.6" font-size="7.9" fill="#1e3a9c" textLength="24.5" lengthAdjust="spacingAndGlyphs" stroke="#1e3a9c" stroke-width="0.3">Lokaler</text>
<text x="694" y="156.2" font-size="14" fill="#6a6a6a" textLength="60.6" lengthAdjust="spacingAndGlyphs" >Medelhyra</text>
<text x="820.5" y="156.2" font-size="14" fill="#6a6a6a" textLength="94" lengthAdjust="spacingAndGlyphs" >Antal fastigheter</text>
<text x="947.5" y="156.2" font-size="14" fill="#6a6a6a" textLength="113.7" lengthAdjust="spacingAndGlyphs" >Fastigheter exkl. Brf</text>
<text x="738.5" y="190.7" font-size="16.4" fill="#4cae28" textLength="40.5" lengthAdjust="spacingAndGlyphs" stroke="#4cae28" stroke-width="0.7">1,428</text>
<text x="785.5" y="191" font-size="6.6" fill="#555" textLength="20.5" lengthAdjust="spacingAndGlyphs" >SEK/m</text>
<text x="806.5" y="188" font-size="4.5" fill="#555" >2</text>
<text x="871" y="190.7" font-size="16.4" fill="#4cae28" textLength="59.5" lengthAdjust="spacingAndGlyphs" stroke="#4cae28" stroke-width="0.7">101,516</text>
<text x="1005.7" y="190.7" font-size="16.4" fill="#4cae28" textLength="51.3" lengthAdjust="spacingAndGlyphs" stroke="#4cae28" stroke-width="0.7">70,977</text>
<text x="688.3" y="225.7" font-size="13.3" fill="#6a6a6a" textLength="87" lengthAdjust="spacingAndGlyphs" >Kalkylerad hyra</text>
<text x="988" y="247.2" font-size="7.6" fill="#555" textLength="80.8" lengthAdjust="spacingAndGlyphs" >Hur räknas grafen fram?</text>
<line x1="988" x2="1069" y1="248.8" y2="248.8" stroke="#777" stroke-width="0.7" stroke-dasharray="1,1"/>
<rect x="694" y="255" width="16.2" height="9" fill="#1abfa9"/>
<text x="713.7" y="262.0" font-size="8.4" fill="#555" textLength="21.3" lengthAdjust="spacingAndGlyphs" >-1940</text>
<rect x="741" y="255" width="16.2" height="9" fill="#2f4bb6"/>
<text x="760.7" y="262.0" font-size="8.4" fill="#555" textLength="39" lengthAdjust="spacingAndGlyphs" >1941-1960</text>
<rect x="807" y="255" width="16.2" height="9" fill="#ff6b6b"/>
<text x="826.7" y="262.0" font-size="8.4" fill="#555" textLength="39" lengthAdjust="spacingAndGlyphs" >1961-1980</text>
<rect x="872" y="255" width="16.2" height="9" fill="#5cb646"/>
<text x="891.7" y="262.0" font-size="8.4" fill="#555" textLength="39" lengthAdjust="spacingAndGlyphs" >1981-2000</text>
<rect x="937.8" y="255" width="16.2" height="9" fill="#8e44ad"/>
<text x="957.5" y="262.0" font-size="8.4" fill="#555" textLength="39.2" lengthAdjust="spacingAndGlyphs" >2001-2010</text>
<rect x="1003.2" y="255" width="16.2" height="9" fill="#e67e22"/>
<text x="1022.9000000000001" y="262.0" font-size="8.4" fill="#555" textLength="39" lengthAdjust="spacingAndGlyphs" >2011-2020</text>
<rect x="694" y="270.4" width="16.2" height="9" fill="#c8450c"/>
<text x="713.7" y="277.4" font-size="8.4" fill="#555" textLength="21.3" lengthAdjust="spacingAndGlyphs" >2021-</text>
<line x1="727" x2="1030" y1="413.7" y2="413.7" stroke="#e8e8e8" stroke-width="1"/>
<line x1="727" x2="1030" y1="385.8" y2="385.8" stroke="#e8e8e8" stroke-width="1"/>
<line x1="727" x2="1030" y1="358.0" y2="358.0" stroke="#e8e8e8" stroke-width="1"/>
<line x1="727" x2="1030" y1="330.1" y2="330.1" stroke="#e8e8e8" stroke-width="1"/>
<line x1="727" x2="1030" y1="302.3" y2="302.3" stroke="#e8e8e8" stroke-width="1"/>
<line x1="727" x2="1030" y1="441.5" y2="441.5" stroke="#aaaaaa" stroke-width="1"/>
<line x1="727.0" x2="727.0" y1="441.5" y2="445" stroke="#aaaaaa" stroke-width="1"/>
<line x1="770.3" x2="770.3" y1="441.5" y2="445" stroke="#aaaaaa" stroke-width="1"/>
<line x1="813.6" x2="813.6" y1="441.5" y2="445" stroke="#aaaaaa" stroke-width="1"/>
<line x1="856.9" x2="856.9" y1="441.5" y2="445" stroke="#aaaaaa" stroke-width="1"/>
<line x1="900.2" x2="900.2" y1="441.5" y2="445" stroke="#aaaaaa" stroke-width="1"/>
<line x1="943.5" x2="943.5" y1="441.5" y2="445" stroke="#aaaaaa" stroke-width="1"/>
<line x1="986.7" x2="986.7" y1="441.5" y2="445" stroke="#aaaaaa" stroke-width="1"/>
<line x1="1030.0" x2="1030.0" y1="441.5" y2="445" stroke="#aaaaaa" stroke-width="1"/>
<line x1="856.3" x2="856.3" y1="302" y2="441" stroke="#c4c4c4" stroke-width="0.8" stroke-dasharray="2,2"/>
<text x="721.5" y="444.5" font-size="8.2" fill="#6e6e6e" text-anchor="end" >0</text>
<text x="721.5" y="416.7" font-size="8.2" fill="#6e6e6e" text-anchor="end" >500</text>
<text x="721.5" y="388.8" font-size="8.2" fill="#6e6e6e" text-anchor="end" >1,000</text>
<text x="721.5" y="361.0" font-size="8.2" fill="#6e6e6e" text-anchor="end" >1,500</text>
<text x="721.5" y="333.1" font-size="8.2" fill="#6e6e6e" text-anchor="end" >2,000</text>
<text x="721.5" y="305.3" font-size="8.2" fill="#6e6e6e" text-anchor="end" >2,500</text>
<text x="841" y="297.5" font-size="8.6" fill="#444" textLength="30.8" lengthAdjust="spacingAndGlyphs" >Prognos</text>
<text x="0" y="0" font-size="8.6" fill="#6e6e6e" text-anchor="end" transform="translate(727.8,447.3) rotate(-45)">2011</text>
<text x="0" y="0" font-size="8.6" fill="#6e6e6e" text-anchor="end" transform="translate(771.1,447.3) rotate(-45)">2014</text>
<text x="0" y="0" font-size="8.6" fill="#6e6e6e" text-anchor="end" transform="translate(814.4,447.3) rotate(-45)">2017</text>
<text x="0" y="0" font-size="8.6" fill="#6e6e6e" text-anchor="end" transform="translate(857.7,447.3) rotate(-45)">2020</text>
<text x="0" y="0" font-size="8.6" fill="#6e6e6e" text-anchor="end" transform="translate(901.0,447.3) rotate(-45)">2021</text>
<text x="0" y="0" font-size="8.6" fill="#6e6e6e" text-anchor="end" transform="translate(944.2,447.3) rotate(-45)">2022</text>
<text x="0" y="0" font-size="8.6" fill="#6e6e6e" text-anchor="end" transform="translate(987.5,447.3) rotate(-45)">2023</text>
<text x="0" y="0" font-size="8.6" fill="#6e6e6e" text-anchor="end" transform="translate(1030.8,447.3) rotate(-45)">2024</text>
<polyline points="727.0,359.8 770.3,352.3 813.6,346.5 856.9,340.5" fill="none" stroke="#e67e22" stroke-width="1.35"/>
<circle cx="727.0" cy="359.8" r="2.0" fill="#e67e22"/>
<circle cx="770.3" cy="352.3" r="2.0" fill="#e67e22"/>
<circle cx="813.6" cy="346.5" r="2.0" fill="#e67e22"/>
<circle cx="856.9" cy="340.5" r="2.0" fill="#e67e22"/>
<polyline points="856.9,340.4 900.2,338.9 943.5,336.9 986.7,333.6 1030.0,330.0" fill="none" stroke="#e67e22" stroke-width="1.35" stroke-dasharray="4,3"/>
<circle cx="856.9" cy="340.4" r="2.0" fill="#e67e22"/>
<circle cx="900.2" cy="338.9" r="2.0" fill="#e67e22"/>
<circle cx="943.5" cy="336.9" r="2.0" fill="#e67e22"/>
<circle cx="986.7" cy="333.6" r="2.0" fill="#e67e22"/>
<circle cx="1030.0" cy="330.0" r="2.0" fill="#e67e22"/>
<polyline points="727.0,364.1 770.3,360.8 813.6,359.4 856.9,354.4" fill="none" stroke="#8e44ad" stroke-width="1.35"/>
<circle cx="727.0" cy="364.1" r="2.0" fill="#8e44ad"/>
<circle cx="770.3" cy="360.8" r="2.0" fill="#8e44ad"/>
<circle cx="813.6" cy="359.4" r="2.0" fill="#8e44ad"/>
<circle cx="856.9" cy="354.4" r="2.0" fill="#8e44ad"/>
<polyline points="856.9,354.4 900.2,352.2 943.5,350.5 986.7,346.5 1030.0,341.5" fill="none" stroke="#8e44ad" stroke-width="1.35" stroke-dasharray="4,3"/>
<circle cx="856.9" cy="354.4" r="2.0" fill="#8e44ad"/>
<circle cx="900.2" cy="352.2" r="2.0" fill="#8e44ad"/>
<circle cx="943.5" cy="350.5" r="2.0" fill="#8e44ad"/>
<circle cx="986.7" cy="346.5" r="2.0" fill="#8e44ad"/>
<circle cx="1030.0" cy="341.5" r="2.0" fill="#8e44ad"/>
<polyline points="727.0,385.5 770.3,382.0 813.6,379.8 856.9,375.9" fill="none" stroke="#5cb646" stroke-width="1.35"/>
<circle cx="727.0" cy="385.5" r="2.0" fill="#5cb646"/>
<circle cx="770.3" cy="382.0" r="2.0" fill="#5cb646"/>
<circle cx="813.6" cy="379.8" r="2.0" fill="#5cb646"/>
<circle cx="856.9" cy="375.9" r="2.0" fill="#5cb646"/>
<polyline points="856.9,375.8 900.2,373.7 943.5,372.5 986.7,369.7 1030.0,366.6" fill="none" stroke="#5cb646" stroke-width="1.35" stroke-dasharray="4,3"/>
<circle cx="856.9" cy="375.8" r="2.0" fill="#5cb646"/>
<circle cx="900.2" cy="373.7" r="2.0" fill="#5cb646"/>
<circle cx="943.5" cy="372.5" r="2.0" fill="#5cb646"/>
<circle cx="986.7" cy="369.7" r="2.0" fill="#5cb646"/>
<circle cx="1030.0" cy="366.6" r="2.0" fill="#5cb646"/>
<polyline points="727.0,386.6 770.3,383.0 813.6,380.5 856.9,375.2" fill="none" stroke="#1abc9c" stroke-width="1.35"/>
<circle cx="727.0" cy="386.6" r="2.0" fill="#1abc9c"/>
<circle cx="770.3" cy="383.0" r="2.0" fill="#1abc9c"/>
<circle cx="813.6" cy="380.5" r="2.0" fill="#1abc9c"/>
<circle cx="856.9" cy="375.2" r="2.0" fill="#1abc9c"/>
<polyline points="856.9,375.1 900.2,373.3 943.5,372.0 986.7,369.1 1030.0,365.1" fill="none" stroke="#1abc9c" stroke-width="1.35" stroke-dasharray="4,3"/>
<circle cx="856.9" cy="375.1" r="2.0" fill="#1abc9c"/>
<circle cx="900.2" cy="373.3" r="2.0" fill="#1abc9c"/>
<circle cx="943.5" cy="372.0" r="2.0" fill="#1abc9c"/>
<circle cx="986.7" cy="369.1" r="2.0" fill="#1abc9c"/>
<circle cx="1030.0" cy="365.1" r="2.0" fill="#1abc9c"/>
<polyline points="727.0,390.2 770.3,386.6 813.6,384.1 856.9,379.8" fill="none" stroke="#2d4db5" stroke-width="1.35"/>
<circle cx="727.0" cy="390.2" r="2.0" fill="#2d4db5"/>
<circle cx="770.3" cy="386.6" r="2.0" fill="#2d4db5"/>
<circle cx="813.6" cy="384.1" r="2.0" fill="#2d4db5"/>
<circle cx="856.9" cy="379.8" r="2.0" fill="#2d4db5"/>
<polyline points="856.9,379.8 900.2,378.7 943.5,376.9 986.7,373.7 1030.0,370.1" fill="none" stroke="#2d4db5" stroke-width="1.35" stroke-dasharray="4,3"/>
<circle cx="856.9" cy="379.8" r="2.0" fill="#2d4db5"/>
<circle cx="900.2" cy="378.7" r="2.0" fill="#2d4db5"/>
<circle cx="943.5" cy="376.9" r="2.0" fill="#2d4db5"/>
<circle cx="986.7" cy="373.7" r="2.0" fill="#2d4db5"/>
<circle cx="1030.0" cy="370.1" r="2.0" fill="#2d4db5"/>
<polyline points="727.0,391.6 770.3,388.0 813.6,385.2 856.9,380.9" fill="none" stroke="#ff6b6b" stroke-width="1.35"/>
<circle cx="727.0" cy="391.6" r="2.0" fill="#ff6b6b"/>
<circle cx="770.3" cy="388.0" r="2.0" fill="#ff6b6b"/>
<circle cx="813.6" cy="385.2" r="2.0" fill="#ff6b6b"/>
<circle cx="856.9" cy="380.9" r="2.0" fill="#ff6b6b"/>
<polyline points="856.9,380.9 900.2,379.4 943.5,378.0 986.7,375.5 1030.0,371.9" fill="none" stroke="#ff6b6b" stroke-width="1.35" stroke-dasharray="4,3"/>
<circle cx="856.9" cy="380.9" r="2.0" fill="#ff6b6b"/>
<circle cx="900.2" cy="379.4" r="2.0" fill="#ff6b6b"/>
<circle cx="943.5" cy="378.0" r="2.0" fill="#ff6b6b"/>
<circle cx="986.7" cy="375.5" r="2.0" fill="#ff6b6b"/>
<circle cx="1030.0" cy="371.9" r="2.0" fill="#ff6b6b"/>
<polyline points="856.9,338.6 900.2,337.6 943.5,336.1 986.7,333.3 1030.0,329.3" fill="none" stroke="#c8450c" stroke-width="1.35" stroke-dasharray="4,3"/>
<circle cx="856.9" cy="338.6" r="2.0" fill="#c8450c"/>
<circle cx="900.2" cy="337.6" r="2.0" fill="#c8450c"/>
<circle cx="943.5" cy="336.1" r="2.0" fill="#c8450c"/>
<circle cx="986.7" cy="333.3" r="2.0" fill="#c8450c"/>
<circle cx="1030.0" cy="329.3" r="2.0" fill="#c8450c"/>
<rect x="704" y="484" width="352" height="20" fill="#e8effc"/>
<rect x="704" y="484" width="352" height="4.5" fill="#dde3f3"/>
<polygon points="704,503.5 735,503 802,502 854,494.8 960,493 1054,491 1056,503.5" fill="#d6e1fa"/>
<rect x="702" y="491" width="4" height="14" rx="1" fill="#fff" stroke="#b5b5b5" stroke-width="0.8"/>
<rect x="1054" y="491" width="4" height="14" rx="1" fill="#fff" stroke="#b5b5b5" stroke-width="0.8"/>
</svg>
</body></html>
